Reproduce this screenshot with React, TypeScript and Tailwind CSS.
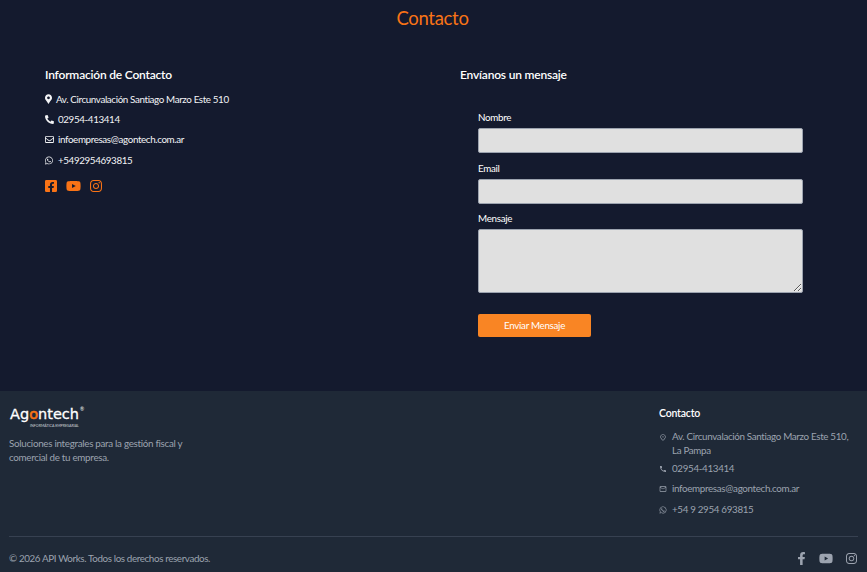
import React from 'react';
import { FaMapMarkerAlt, FaPhone, FaWhatsapp, FaFacebookSquare, FaYoutube, FaInstagram, FaFacebookF, FaRegEnvelope } from 'react-icons/fa';
import { MdOutlinePlace, MdPhone, MdOutlineEmail } from 'react-icons/md';

const App: React.FC = () => {
  return (
    <div className="w-[867px] h-[572px] overflow-hidden bg-[#141a2e] text-white font-['Lato',sans-serif]">
      {/* Contact section */}
      <section className="h-[391px] flex flex-col">
        <h1 className="pt-[5px] h-[37px] pr-[2px] text-center text-[18.5px] leading-[27px] tracking-[-0.3px] text-[#f97316]">Contacto</h1>
        <div className="flex pl-[45px] pt-[29px]">
          <div className="w-[415px]">
            <h2 className="text-[12px] leading-[18px] font-semibold tracking-[-0.2px]">Información de Contacto</h2>
            <ul className="mt-[5px] text-[9.8px] tracking-[-0.37px] text-[#f3f4f6]">
              <li className="h-[20.3px] flex items-center gap-[4px]">
                <FaMapMarkerAlt className="w-[7px] h-[10px]" />
                Av. Circunvalación Santiago Marzo Este 510
              </li>
              <li className="h-[20.3px] flex items-center gap-[4px]">
                <FaPhone className="w-[9px] h-[9px] rotate-90" />
                02954-413414
              </li>
              <li className="h-[20.3px] flex items-center gap-[4px]">
                <FaRegEnvelope className="w-[9px] h-[9px]" />
                infoempresas@agontech.com.ar
              </li>
              <li className="h-[20.3px] flex items-center gap-[5px]">
                <FaWhatsapp className="w-[8px] h-[9px]" />
                +5492954693815
              </li>
            </ul>
            <div className="mt-[9px] flex items-center gap-[9px] text-[#f97316]">
              <FaFacebookSquare className="w-[12px] h-[14px]" />
              <FaYoutube className="w-[15px] h-[14px]" />
              <FaInstagram className="w-[12px] h-[14px]" />
            </div>
          </div>
          <div className="w-[360px]">
            <h2 className="text-[12px] leading-[18px] font-semibold tracking-[-0.2px]">Envíanos un mensaje</h2>
            <form className="pl-[18px] pt-[26px]">
              <label className="block text-[9.8px] tracking-[-0.3px] leading-[14px]">Nombre</label>
              <input className="mt-[4px] block w-[325px] h-[25px] bg-[#e0e0e0] rounded-[2px] border border-[#9ca3af]" />
              <label className="block mt-[7px] text-[9.8px] tracking-[-0.3px] leading-[14px] pt-[1px]">Email</label>
              <input className="mt-[4px] block w-[325px] h-[25px] bg-[#e0e0e0] rounded-[2px] border border-[#9ca3af]" />
              <label className="block mt-[6px] text-[9.8px] tracking-[-0.3px] leading-[14px] pt-[1px]">Mensaje</label>
              <textarea className="mt-[4px] block w-[325px] h-[64px] bg-[#e0e0e0] rounded-[2px] border border-[#9ca3af]" />
              <button type="button" className="mt-[21px] block w-[113px] h-[23px] bg-[#f98524] rounded-[2px] text-[9.8px] tracking-[-0.3px] text-[#fff]">
                Enviar Mensaje
              </button>
            </form>
          </div>
        </div>
      </section>

      {/* Footer */}
      <footer className="h-[181px] bg-[#1f2937] px-[9px] flex flex-col">
        <div className="h-[145px] flex justify-between">
          <div className="w-[190px] pt-[14px]">
            <div className="relative h-[25px] w-[76px]">
              <span className="block pl-[1px] font-['DejaVu_Sans',sans-serif] text-[14.5px] leading-[19px] [-webkit-text-stroke:0.3px_white] text-white whitespace-nowrap">
                Ag<span className="text-[#f97316] [-webkit-text-stroke:0.6px_#f97316]">o</span>ntech
              </span>
              <span className="absolute left-[71px] top-[1px] text-[5px] leading-[6px] text-white">®</span>
              <span className="absolute left-[21px] top-[19px] text-[3.6px] leading-[4px] text-[#d1d5db] whitespace-nowrap">INFORMÁTICA EMPRESARIAL</span>
            </div>
            <p className="mt-[6px] text-[9.8px] tracking-[-0.29px] leading-[14px] text-[#9ca3af]">
              Soluciones integrales para la gestión fiscal y comercial de tu empresa.
            </p>
          </div>
          <div className="w-[199px] pt-[14px]">
            <h3 className="text-[10.5px] tracking-[-0.2px] leading-[16px] font-semibold">Contacto</h3>
            <ul className="mt-[6px] text-[9.8px] tracking-[-0.33px] text-[#9ca3af]">
              <li className="flex gap-[5px] leading-[14px] pb-[4px] pt-[2px]">
                <MdOutlinePlace className="w-[8px] h-[9px] mt-[4px] shrink-0" />
                <span>Av. Circunvalación Santiago Marzo Este 510, La Pampa</span>
              </li>
              <li className="flex gap-[5px] leading-[14px] h-[20.4px]">
                <MdPhone className="w-[8px] h-[8px] mt-[4px] shrink-0" />
                <span>02954-413414</span>
              </li>
              <li className="flex gap-[5px] leading-[14px] h-[20.4px]">
                <MdOutlineEmail className="w-[8px] h-[8px] mt-[4px] shrink-0" />
                <span>infoempresas@agontech.com.ar</span>
              </li>
              <li className="flex gap-[5px] leading-[14px] h-[20.4px]">
                <FaWhatsapp className="w-[8px] h-[8px] mt-[4px] shrink-0" />
                <span>+54 9 2954 693815</span>
              </li>
            </ul>
          </div>
        </div>
        <div className="flex-1 border-t border-[#374151] pt-[8px] flex items-center justify-between text-[9.8px] tracking-[-0.37px] text-[#9ca3af]">
          <span>© 2026 API Works. Todos los derechos reservados.</span>
          <span className="flex items-center gap-[13px] pr-[1px]">
            <FaFacebookF className="w-[9px] h-[13px]" />
            <FaYoutube className="w-[14px] h-[13px]" />
            <FaInstagram className="w-[11px] h-[13px]" />
          </span>
        </div>
      </footer>
    </div>
  );
};

export default App;
